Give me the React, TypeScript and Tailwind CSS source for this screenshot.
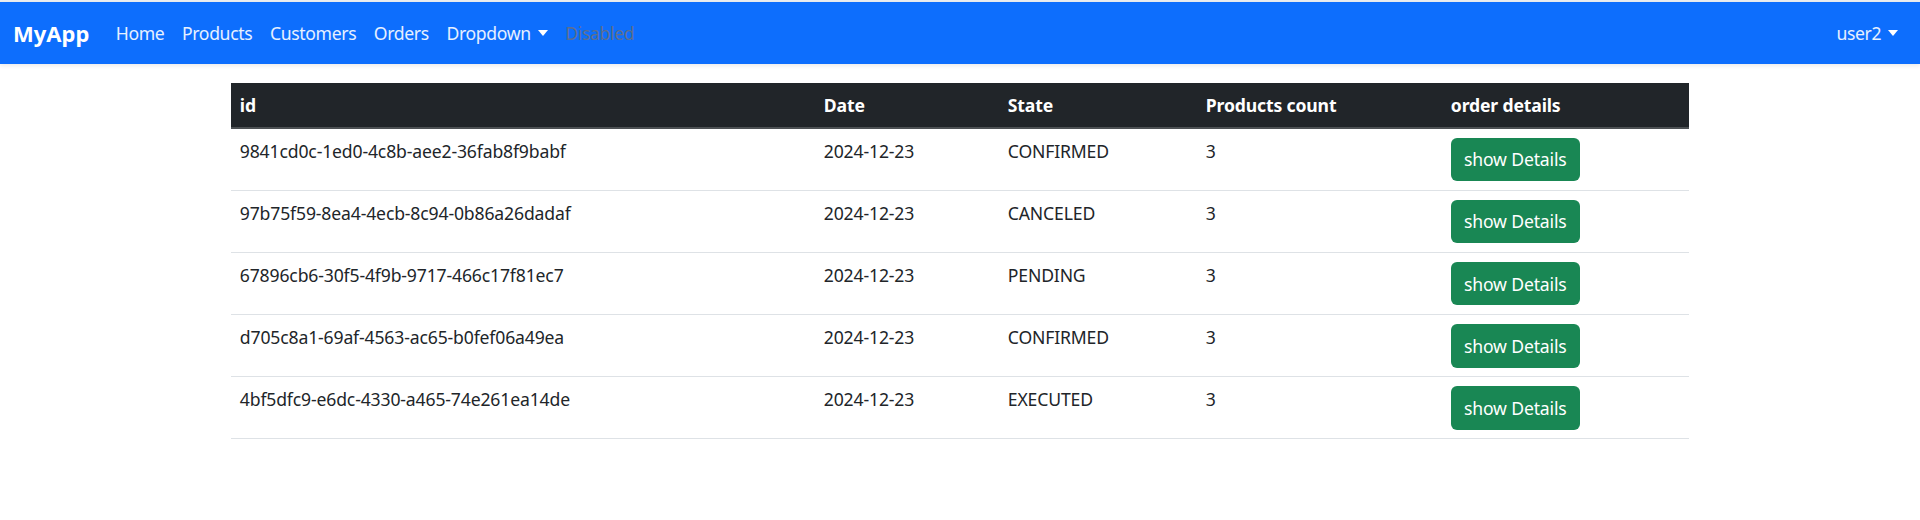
import React from "react";

type Order = { id: string; date: string; state: string; count: number };

const orders: Order[] = [
  { id: "9841cd0c-1ed0-4c8b-aee2-36fab8f9babf", date: "2024-12-23", state: "CONFIRMED", count: 3 },
  { id: "97b75f59-8ea4-4ecb-8c94-0b86a26dadaf", date: "2024-12-23", state: "CANCELED", count: 3 },
  { id: "67896cb6-30f5-4f9b-9717-466c17f81ec7", date: "2024-12-23", state: "PENDING", count: 3 },
  { id: "d705c8a1-69af-4563-ac65-b0fef06a49ea", date: "2024-12-23", state: "CONFIRMED", count: 3 },
  { id: "4bf5dfc9-e6dc-4330-a465-74e261ea14de", date: "2024-12-23", state: "EXECUTED", count: 3 },
];

const Caret = () => (
  <span className="inline-block ml-[7px] align-middle w-0 h-0 border-t-[6px] border-t-white border-x-[5px] border-x-transparent" />
);

const Nav: React.FC = () => {
  const links = ["Home", "Products", "Customers", "Orders"];
  return (
    <nav className="bg-[#0d6efd] h-[62px] flex items-center justify-between px-[13px] shadow-[0_2px_4px_rgba(0,0,0,0.08)]">
      <div className="flex items-center">
        <a href="#" className="text-[22px] font-bold text-white mr-[17.6px] leading-[33px]">
          MyApp
        </a>
        <ul className="flex items-center tracking-[-0.35px]">
          {links.map((l) => (
            <li key={l}>
              <a href="#" className="block px-[8.8px] py-[8.8px] text-white/90 leading-[26.4px]">
                {l}
              </a>
            </li>
          ))}
          {/* Dropdown */}
          <li>
            <a href="#" className="flex items-center px-[8.8px] py-[8.8px] text-white/90 leading-[26.4px]">
              Dropdown
              <Caret />
            </a>
          </li>
          <li>
            <span className="block px-[8.8px] py-[8.8px] text-[#5f6f8c] leading-[26.4px]">Disabled</span>
          </li>
        </ul>
      </div>
      <a href="#" className="flex items-center px-[8.8px] py-[8.8px] text-white/90 leading-[26.4px] tracking-[-0.35px]">
        user2
        <Caret />
      </a>
    </nav>
  );
};

export default function App() {
  return (
    <div className="min-h-[520px] bg-white text-[17.6px] text-[#212529] font-['Noto_Sans',sans-serif] border-t-2 border-[#e9ecef]">
      <Nav />
      <table className="w-[1458px] mx-auto mt-[19px] table-fixed border-collapse text-left tracking-[-0.15px]">
        <colgroup>
          <col className="w-[584px]" />
          <col className="w-[184px]" />
          <col className="w-[198px]" />
          <col className="w-[245px]" />
          <col className="w-[247px]" />
        </colgroup>
        <thead className="bg-[#212529] text-white">
          <tr className="border-b-2 border-[#4d5154]">
            {["id", "Date", "State", "Products count", "order details"].map((h) => (
              <th key={h} className="px-[8.8px] py-[8.8px] leading-[26.4px] font-bold">
                {h}
              </th>
            ))}
          </tr>
        </thead>
        <tbody>
          {orders.map((o) => (
            <tr key={o.id} className="border-b border-[#dee2e6]">
              <td className="px-[8.8px] py-[8.8px] leading-[26.4px] align-top">{o.id}</td>
              <td className="px-[8.8px] py-[8.8px] leading-[26.4px] align-top">{o.date}</td>
              <td className="px-[8.8px] py-[8.8px] leading-[26.4px] align-top">{o.state}</td>
              <td className="px-[8.8px] py-[8.8px] leading-[26.4px] align-top">{o.count}</td>
              <td className="px-[8.8px] py-[8.8px] align-top">
                <button className="w-[129px] h-[43.5px] rounded-[6px] bg-[#198754] text-white leading-[26.4px]">
                  show Details
                </button>
              </td>
            </tr>
          ))}
        </tbody>
      </table>
    </div>
  );
}
